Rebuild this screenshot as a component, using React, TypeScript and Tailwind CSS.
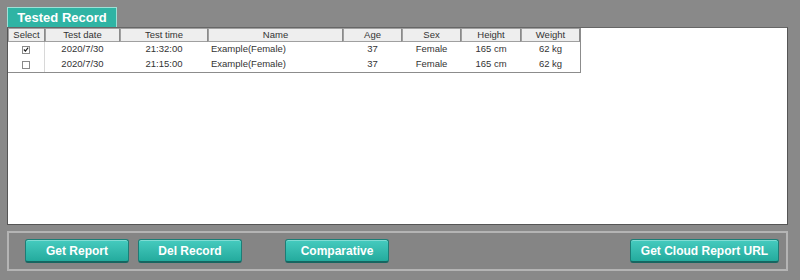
const rows = [
  { checked: true, date: "2020/7/30", time: "21:32:00", name: "Example(Female)", age: "37", sex: "Female", height: "165 cm", weight: "62 kg" },
  { checked: false, date: "2020/7/30", time: "21:15:00", name: "Example(Female)", age: "37", sex: "Female", height: "165 cm", weight: "62 kg" },
];

const cols = [
  { label: "Select", w: "w-[37px]" },
  { label: "Test date", w: "w-[75px]" },
  { label: "Test time", w: "w-[88px]" },
  { label: "Name", w: "w-[135px]" },
  { label: "Age", w: "w-[59px]" },
  { label: "Sex", w: "w-[59px]" },
  { label: "Height", w: "w-[60px]" },
  { label: "Weight", w: "w-[59px]" },
];

const Btn = ({ label, className }: { label: string; className: string }) => (
  <button
    className={
      "h-[24px] rounded-[3px] border border-[#1c7d76] border-b-2 border-b-[#176661] bg-gradient-to-b from-[#45cbbf] to-[#23ab9d] text-[12px] font-bold text-white shadow-[inset_0_1px_0_#7fdcd3] " +
      className
    }
  >
    {label}
  </button>
);

const CheckBox = ({ checked }: { checked: boolean }) => (
  <span className="flex h-[8px] w-[8px] items-center justify-center border border-[#8a8a8a] bg-white">
    {checked && (
      <svg width="7" height="7" viewBox="0 0 7 7">
        <path d="M1 3.5 L2.8 5.3 L6 1.2" stroke="#222" strokeWidth="1.4" fill="none" />
      </svg>
    )}
  </span>
);

const App = () => {
  return (
    <div className="flex h-[280px] w-[800px] flex-col bg-[#898989] pl-[7px] pr-[12px] pt-[7px] font-['Liberation_Sans',Arial,sans-serif]">
      <div className="flex h-[20px] w-[110px] items-center justify-center border-l border-t border-r border-[#9fe0d6] bg-[#2fb4a4] text-[13px] font-bold text-white">
        Tested Record
      </div>
      <div className="h-[198px] border border-[#555] border-t-[#666] bg-white">
        <div className="flex w-fit flex-col border-b border-r border-[#8c8c8c] text-[9.5px] text-[#333]">
          <div className="flex h-[14px]">
            {cols.map((c) => (
              <div
                key={c.label}
                className={c.w + " flex items-center justify-center border border-[#a0a0a0] border-r-[#8a8a8a] bg-[#eeeeee] leading-none"}
              >
                {c.label}
              </div>
            ))}
          </div>
          {rows.map((r, i) => (
            <div key={i} className="flex h-[15px] items-center">
              <div className="flex h-full w-[37px] items-center justify-center border-r border-[#d8d8d8]">
                <CheckBox checked={r.checked} />
              </div>
              <div className="w-[75px] text-center">{r.date}</div>
              <div className="w-[88px] text-center">{r.time}</div>
              <div className="w-[135px] pl-[3px]">{r.name}</div>
              <div className="w-[59px] text-center">{r.age}</div>
              <div className="w-[59px] text-center">{r.sex}</div>
              <div className="w-[60px] text-center">{r.height}</div>
              <div className="w-[59px] text-center">{r.weight}</div>
            </div>
          ))}
        </div>
      </div>
      <div className="mt-[6px] flex h-[40px] items-center border-2 border-[#b4b4b4] bg-[#858585] pl-[16px] pr-[7px]">
        <Btn label="Get Report" className="w-[104px]" />
        <Btn label="Del Record" className="ml-[9px] w-[104px]" />
        <Btn label="Comparative" className="ml-[43px] w-[104px]" />
        <Btn label="Get Cloud Report URL" className="ml-auto w-[149px]" />
      </div>
    </div>
  );
};

export default App;
